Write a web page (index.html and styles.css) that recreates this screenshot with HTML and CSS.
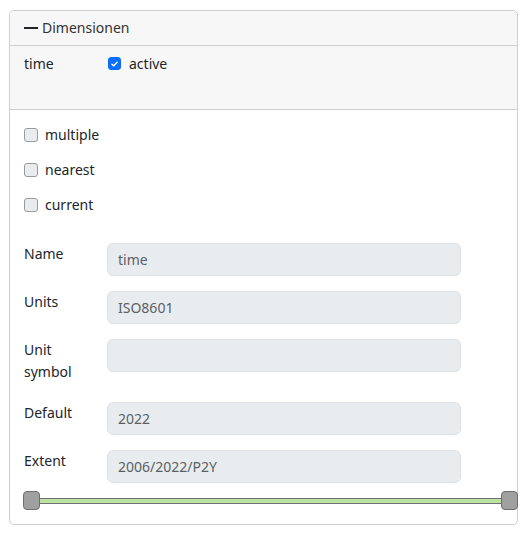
FILE: index.html
```html
<!DOCTYPE html>
<html>
<head>
<meta charset="utf-8">
<link rel="stylesheet" href="styles.css">
</head>
<body>
<div class="card">
  <div class="card-header"><span class="dash"></span>Dimensionen</div>
  <div class="dim-head">
    <span class="dim-name">time</span>
    <label class="check"><span class="box checked"><svg viewBox="0 0 12 12" width="12" height="12"><path d="M3.2 6.2 L5.2 8 L8.8 4.2" fill="none" stroke="#fff" stroke-width="1.6" stroke-linecap="round" stroke-linejoin="round"/></svg></span>active</label>
  </div>
  <div class="card-body">
    <label class="check row-check"><span class="box"></span>multiple</label>
    <label class="check row-check"><span class="box"></span>nearest</label>
    <label class="check row-check"><span class="box"></span>current</label>

    <div class="form">
      <div class="form-row"><div class="lbl">Name</div><div class="input">time</div></div>
      <div class="form-row"><div class="lbl">Units</div><div class="input">ISO8601</div></div>
      <div class="form-row"><div class="lbl">Unit<br>symbol</div><div class="input"></div></div>
      <div class="form-row"><div class="lbl">Default</div><div class="input">2022</div></div>
      <div class="form-row"><div class="lbl">Extent</div><div class="input">2006/2022/P2Y</div></div>
    </div>

    <div class="slider">
      <span class="handle"></span>
      <span class="track"></span>
      <span class="handle"></span>
    </div>
  </div>
</div>
</body>
</html>
```
FILE: styles.css
```css
* { box-sizing: border-box; }
body {
  margin: 0;
  font-family: "Noto Sans", "Open Sans", sans-serif;
  font-size: 14px;
  color: #212529;
  background: #fff;
}
.card {
  margin: 10px 10px 14px 9px;
  width: 509px;
  border: 1px solid #cfcfcf;
  border-radius: 5px;
  overflow: visible;
}
.card-header {
  height: 35px;
  display: flex;
  align-items: center;
  padding: 0 14px;
  background: #f7f7f7;
  border-bottom: 1px solid #cfcfcf;
  border-radius: 5px 5px 0 0;
  line-height: 20px;
  color: #333;
}
.dash {
  display: inline-block;
  width: 14px;
  height: 2.5px;
  background: #212529;
  margin-right: 4px;
}
.dim-head {
  height: 64px;
  background: #f7f7f7;
  border-bottom: 1px solid #cfcfcf;
  padding: 7px 14px 0;
  display: flex;
  align-items: flex-start;
  line-height: 21px;
}
.dim-name {
  width: 84px;
}
.check {
  display: flex;
  align-items: center;
  line-height: 21px;
}
.box {
  width: 14px;
  height: 14px;
  border: 1.5px solid #9a9a9a;
  border-radius: 3px;
  background: #e9ecef;
  margin-right: 7px;
  display: flex;
  align-items: center;
  justify-content: center;
}
.box.checked {
  width: 13px;
  height: 13px;
  background: #0d6efd;
  border-color: #0d6efd;
  margin-right: 8px;
}
.card-body {
  padding: 14px 0 14px 14px;
}
.row-check {
  margin-bottom: 14px;
}
.form {
  margin-top: 28px;
}
.form-row {
  display: flex;
  align-items: flex-start;
  margin-bottom: 15px;
}
.form-row:last-child {
  margin-bottom: 8px;
}
.lbl {
  width: 83px;
  line-height: 22px;
  padding-bottom: 4px;
  margin-top: 0;
}
.input {
  width: 354px;
  height: 33px;
  background: #e9ecef;
  border: 1px solid #dee2e6;
  border-radius: 6px;
  padding: 0 10px;
  line-height: 31px;
  color: #5a5f64;
}
.slider {
  display: flex;
  align-items: center;
  margin-left: -1px;
  margin-right: -1px;
  height: 19px;
}
.handle {
  width: 17px;
  height: 19px;
  background: #a0a0a0;
  border: 1px solid #6e6e6e;
  border-radius: 4px;
  flex: none;
}
.track {
  flex: 1;
  height: 6px;
  background: #bde3a2;
  border-top: 1px solid #6f6f6f;
  border-bottom: 1px solid #6f6f6f;
}
```
